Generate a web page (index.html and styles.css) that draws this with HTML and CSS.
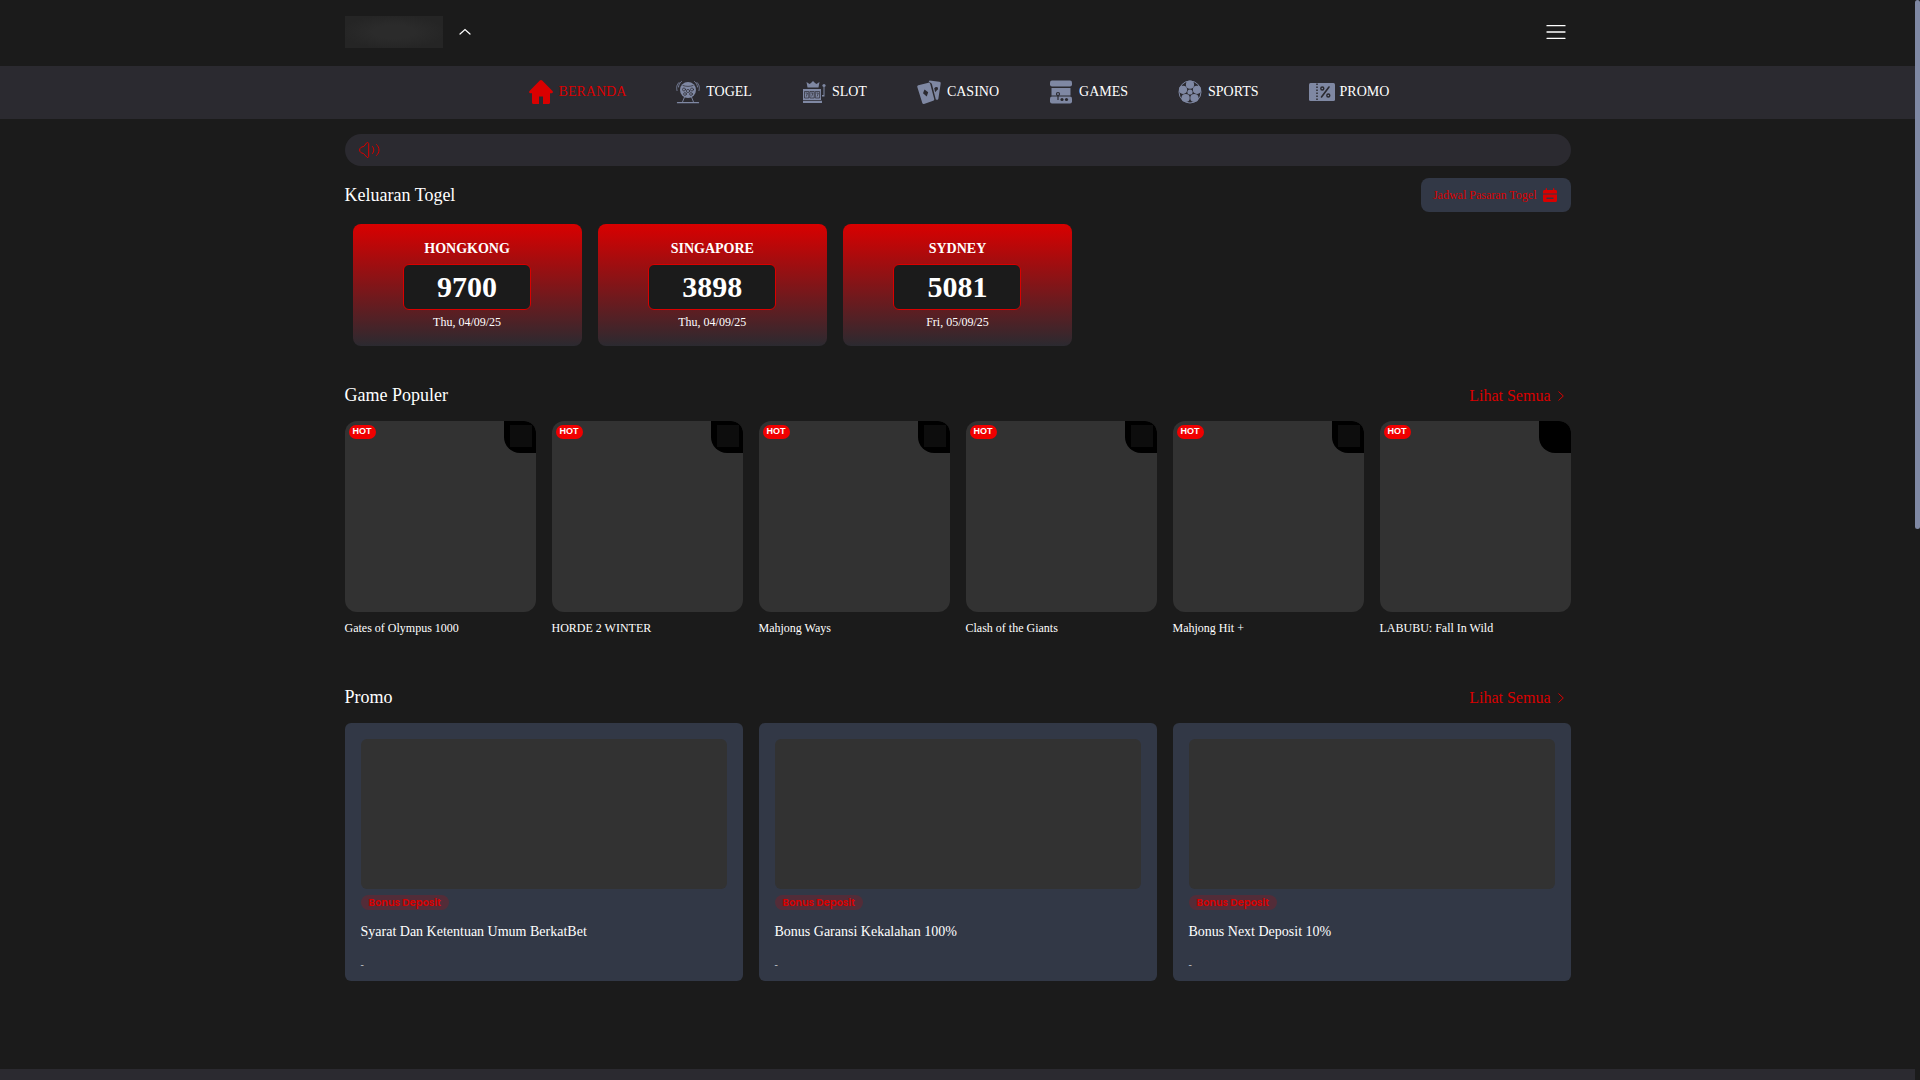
FILE: index.html
```html
<!DOCTYPE html>
<html lang="id">
<head>
<meta charset="utf-8">
<meta name="viewport" content="width=device-width, initial-scale=1">
<title>Beranda</title>
<link rel="stylesheet" href="styles.css">
</head>
<body>
<header class="topbar">
  <div class="container topbar-row">
    <a href="#" class="logo" aria-label="Beranda"></a>
    <button type="button" class="icon-button" aria-label="Tutup">
      <svg width="12" height="8" viewBox="0 0 12 8" fill="none" stroke="currentColor" stroke-width="1.2" stroke-linecap="round"><path d="M1 6L6 1.500l5 4.500"/></svg>
    </button>
    <button type="button" class="icon-button menu-button" aria-label="Menu">
      <svg width="20" height="16" viewBox="0 0 20 16" fill="none" stroke="currentColor" stroke-width="1.300" stroke-linecap="round"><path d="M1 1.700h18M1 8h18M1 14.300h18"/></svg>
    </button>
  </div>
</header>

<nav class="mainnav">
  <a href="#" class="nav-link active">
    <svg width="24" height="24" viewBox="0 0 24 24" fill="currentColor"><path d="M10.800.6a1.800 1.800 0 0 1 2.400 0L23.500 11c.8.900.4 2-.7 2.200H21v9.300c0 .9-.6 1.500-1.500 1.500H14v-7.500H10V24H4.500C3.600 24 3 23.400 3 22.500v-9.300H1.200C.1 13-.3 11.900.500 11z"/></svg>
    BERANDA</a>
  <a href="#" class="nav-link">
    <svg width="24" height="24" viewBox="0 0 24 24" fill="none" stroke="currentColor" stroke-linecap="round"><circle cx="12" cy="10" r="8" fill="currentColor" stroke="none"/><g stroke="#2b2a30" stroke-width=".7"><circle cx="8" cy="9.500" r="1.500"/><circle cx="16" cy="9.500" r="1.500"/><circle cx="9" cy="14" r="1.400"/><circle cx="15" cy="14" r="1.400"/><circle cx="12" cy="11" r="1.600"/><path d="M7 5.500c3 1.200 7 1.200 10 0"/></g><path stroke-width=".9" d="M3 2.500C.5 5 .3 7.500 1 10.500M5.500 1.500C3.300 3.200 2.700 5 2.500 7M21 2.500c2.500 2.500 2.700 5 2 8M18.500 1.500c2.200 1.700 2.800 3.500 3 5.500M8.500 17L6.500 22M15.500 17l2 5"/><path stroke-width="1.300" d="M1.500 22.700h21"/></svg>
    TOGEL</a>
  <a href="#" class="nav-link">
    <svg width="24" height="24" viewBox="0 0 24 24" fill="currentColor"><path d="M5.500 7.500L4.500 2l3 2L9 3l2-2 2 2 1.500 1 3-2-1 5.500zM1 9h18v11H1zM1 20.800h19V23H1zM20 15h1.500V7h1v9.500H20z"/><circle cx="22" cy="5.500" r="1.600"/><g fill="none" stroke="#2b2a30" stroke-width=".7"><path d="M2.500 11.500h4.300v6.500H2.500zM7.900 11.500h4.300v6.500H7.900zM13.300 11.500h4.300v6.500h-4.300zM3.500 13h2l-1.200 3.500M8.900 13h2l-1.200 3.500M14.300 13h2l-1.200 3.500"/></g></svg>
    SLOT</a>
  <a href="#" class="nav-link">
    <svg width="24" height="24" viewBox="0 0 24 24" fill="currentColor"><path d="M1.300 5.300L11.500 2.700c.8-.2 1.500.2 1.700 1l4 15.400c.2.800-.2 1.500-1 1.700L7 23.900c-.8.200-1.500-.2-1.700-1L.3 7c-.2-.8.200-1.500 1-1.700z"/><path d="M12.500.5l9.800 1.300c1 .1 1.600.8 1.400 1.700l-2.300 15c-.1.900-.7 1.400-1.600 1.300l-1-.2-3.800-15c-.4-1.600-1.800-2.600-3.600-2.200z"/><path fill="#2b2a30" d="M7.500 9.500l3.700 2.800-1.500 4.200L6 13.300z"/><path fill="#2b2a30" d="M17.300 8.500c1.500-2.500 4.500-1.500 3.500.8l-2.600 3z"/></svg>
    CASINO</a>
  <a href="#" class="nav-link">
    <svg width="24" height="24" viewBox="0 0 24 24" fill="currentColor"><rect x="1" y=".5" width="22" height="6" rx="2"/><path d="M2.500 8h19v7.500h-19z"/><rect x="1" y="16.500" width="22" height="7" rx="2"/><g fill="none" stroke="#2b2a30" stroke-width="1.200"><circle cx="9" cy="14" r="1.500"/><path d="M9 15.500V20"/></g><circle cx="13" cy="19.500" r="1.600" fill="#2b2a30"/><circle cx="17.500" cy="19.500" r="1.600" fill="#2b2a30"/></svg>
    GAMES</a>
  <a href="#" class="nav-link">
    <svg width="24" height="24" viewBox="0 0 24 24" fill="currentColor"><circle cx="12" cy="12" r="11" fill="none" stroke="currentColor" stroke-width="1"/><circle cx="12" cy="12" r="2.600"/><circle cx="12" cy="4.700" r="4.100"/><circle cx="19" cy="9.800" r="4.100"/><circle cx="16.400" cy="18" r="4.100"/><circle cx="7.600" cy="18" r="4.100"/><circle cx="5" cy="9.800" r="4.100"/></svg>
    SPORTS</a>
  <a href="#" class="nav-link nav-promo">
    <svg width="26" height="24" viewBox="0 0 26 24" fill="currentColor"><rect y="3" width="26" height="18" rx="1.500"/><g fill="none" stroke="#2b2a30"><path d="M8 3.500V21" stroke-width="1.500" stroke-dasharray="1.500 1.500"/><path d="M20 7L12.500 17" stroke-width="1.600" stroke-linecap="round"/><circle cx="13.300" cy="8.500" r="1.500" stroke-width="1.400"/><circle cx="19.300" cy="15.500" r="1.500" stroke-width="1.400"/></g></svg>
    PROMO</a>
</nav>

<main class="container main">
  <div class="announcement">
    <svg width="21" height="16" viewBox="0 0 21 16" fill="none" stroke="currentColor" stroke-linecap="round" stroke-linejoin="round"><path d="M8 .7C9 .2 9.700.7 9.700 1.700v12.600c0 1-.7 1.500-1.700 1L4.500 11.500C2 11 .6 10 .6 8S2 5 4.500 4.500zM13.500 4.500c1.800 2 1.800 5 0 7M17.500 2.500c3.400 3 3.400 8 0 11"/></svg>
  </div>

  <section class="section">
    <div class="section-head results-head">
      <h2>Keluaran Togel</h2>
      <button type="button" class="schedule-button">Jadwal Pasaran Togel
        <svg width="14" height="14" viewBox="0 0 14 14" fill="currentColor"><path d="M0 3.500C0 2.600.6 2 1.500 2H2.700V.7c0-.9 1.300-.9 1.300 0V2h6V.7c0-.9 1.300-.9 1.300 0V2h1.200c.9 0 1.500.6 1.500 1.500v2H0zM0 6.500h14v6c0 .9-.6 1.500-1.500 1.500h-11C.6 14 0 13.400 0 12.500zM3.500 9.500v1.500h7V9.500z" fill-rule="evenodd"/></svg>
      </button>
    </div>
    <div class="results">
      <article class="result"><h3>HONGKONG</h3><strong class="result-number">9700</strong><time datetime="2025-09-04">Thu, 04/09/25</time></article>
      <article class="result"><h3>SINGAPORE</h3><strong class="result-number">3898</strong><time datetime="2025-09-04">Thu, 04/09/25</time></article>
      <article class="result"><h3>SYDNEY</h3><strong class="result-number">5081</strong><time datetime="2025-09-05">Fri, 05/09/25</time></article>
    </div>
  </section>

  <section class="section games-section">
    <div class="section-head">
      <h2>Game Populer</h2>
      <a href="#" class="more">Lihat Semua<svg width="6" height="10" viewBox="0 0 6 10" fill="none" stroke="currentColor"><path d="M.5.500L5.300 5 .5 9.500"/></svg></a>
    </div>
    <div class="games">
      <a href="#" class="game"><span class="thumb"><span class="hot">HOT</span><span class="provider"><span class="provider-logo"></span></span></span>Gates of Olympus 1000</a>
      <a href="#" class="game"><span class="thumb"><span class="hot">HOT</span><span class="provider"><span class="provider-logo"></span></span></span>HORDE 2 WINTER</a>
      <a href="#" class="game"><span class="thumb"><span class="hot">HOT</span><span class="provider"><span class="provider-logo"></span></span></span>Mahjong Ways</a>
      <a href="#" class="game"><span class="thumb"><span class="hot">HOT</span><span class="provider"><span class="provider-logo"></span></span></span>Clash of the Giants</a>
      <a href="#" class="game"><span class="thumb"><span class="hot">HOT</span><span class="provider"><span class="provider-logo"></span></span></span>Mahjong Hit +</a>
      <a href="#" class="game"><span class="thumb"><span class="hot">HOT</span><span class="provider"></span></span>LABUBU: Fall In Wild</a>
    </div>
  </section>

  <section class="section promo-section">
    <div class="section-head">
      <h2>Promo</h2>
      <a href="#" class="more">Lihat Semua<svg width="6" height="10" viewBox="0 0 6 10" fill="none" stroke="currentColor"><path d="M.5.500L5.300 5 .5 9.500"/></svg></a>
    </div>
    <div class="promos">
      <article class="promo"><div class="promo-image"></div><span class="tag">Bonus Deposit</span><h3>Syarat Dan Ketentuan Umum BerkatBet</h3><p>-</p></article>
      <article class="promo"><div class="promo-image"></div><span class="tag">Bonus Deposit</span><h3>Bonus Garansi Kekalahan 100%</h3><p>-</p></article>
      <article class="promo"><div class="promo-image"></div><span class="tag">Bonus Deposit</span><h3>Bonus Next Deposit 10%</h3><p>-</p></article>
    </div>
  </section>
</main>
<footer class="footer"></footer>
<div class="scroll-thumb"></div>
</body>
</html>
```
FILE: styles.css
```css
:root {
  --bg: #1b1b1b;
  --panel: #2b2a30;
  --slate: #323846;
  --red: #d90000;
  --muted: #7f88a3;
  --placeholder: #323232;
}

* {
  box-sizing: border-box;
}

body {
  margin: 0;
  padding-right: 5px;
  min-height: 100vh;
  display: flex;
  flex-direction: column;
  background: var(--bg);
  color: #fff;
  font-family: "Liberation Serif", serif;
  font-size: 14px;
  line-height: 20px;
}

h2,
h3,
p {
  margin: 0;
  font-weight: 400;
}

h3 {
  font-size: 14px;
}

a {
  color: inherit;
  text-decoration: none;
}

button {
  border: 0;
  font: inherit;
  cursor: pointer;
}

svg {
  display: block;
  flex: none;
}

.container {
  width: 100%;
  max-width: 1250px;
  margin: 0 auto;
  padding: 0 12px;
}

.topbar-row {
  display: flex;
  align-items: center;
  gap: 12px;
  padding-top: 16px;
  padding-bottom: 18px;
}

.logo {
  width: 98px;
  height: 32px;
  background: radial-gradient(ellipse, #2b2b2b 30%, #252525 75%);
}

.icon-button {
  padding: 4px;
  background: none;
  color: #fff;
}

.menu-button {
  margin-left: auto;
  padding: 0 5px;
}

.mainnav {
  display: flex;
  justify-content: center;
  flex-wrap: wrap;
  gap: 0 50px;
  padding-left: 3px;
  background: var(--panel);
}

.nav-link {
  display: flex;
  align-items: center;
  gap: 6px;
  padding: 14px 0 15px;
  line-height: 24px;
}

.nav-promo {
  gap: 5px;
}

.nav-link svg {
  color: var(--muted);
}

.nav-link.active,
.nav-link.active svg {
  color: var(--red);
}

.main {
  padding-top: 15px;
  padding-bottom: 88px;
}

.announcement {
  display: flex;
  align-items: center;
  height: 32px;
  padding: 0 14px;
  border-radius: 16px;
  background: var(--panel);
  color: var(--red);
}

.section {
  display: flex;
  flex-direction: column;
  gap: 12px;
  margin-top: 12px;
}

.games-section {
  margin-top: 36px;
}

.promo-section {
  margin-top: 48px;
}

.section-head {
  display: flex;
  justify-content: space-between;
  align-items: center;
}

.section-head h2 {
  font-size: 18px;
  line-height: 27px;
}

.schedule-button {
  display: flex;
  align-items: center;
  gap: 6px;
  padding: 8px 14px 8px 12px;
  border-radius: 8px;
  background: var(--slate);
  color: var(--red);
  font-size: 12px;
  line-height: 18px;
}

.results {
  display: grid;
  grid-template-columns: repeat(5, 1fr);
  gap: 16px;
  padding: 0 8px;
}

.result {
  display: flex;
  flex-direction: column;
  align-items: center;
  padding: 16px 12px 15px;
  border-radius: 8px;
  background: linear-gradient(180deg, var(--red), var(--panel));
}

.result h3 {
  font-weight: 700;
  line-height: 18px;
}

.result-number {
  width: 128px;
  margin: 6px 0 4px;
  border: 1px solid var(--red);
  border-radius: 6px;
  background: var(--bg);
  font-size: 30px;
  line-height: 44px;
  text-align: center;
}

.result time {
  font-size: 12px;
  line-height: 17px;
}

.more {
  display: flex;
  align-items: center;
  gap: 7px;
  padding-right: 7px;
  color: var(--red);
  font-size: 16px;
  line-height: 23px;
}

.games {
  display: grid;
  grid-template-columns: repeat(6, 1fr);
  gap: 16px;
}

.game {
  display: flex;
  flex-direction: column;
  gap: 8px;
  font-size: 12px;
  line-height: 16px;
}

.thumb {
  display: flex;
  justify-content: space-between;
  align-items: flex-start;
  aspect-ratio: 1;
  border-radius: 12px;
  overflow: hidden;
  background: var(--placeholder);
}

.hot {
  margin: 4px;
  padding: 0 4px 2px;
  border-radius: 7px;
  background: #f00000;
  font: 700 9px/12px "Liberation Sans", sans-serif;
}

.provider {
  width: 32px;
  height: 32px;
  padding: 4px 4px 6px 6px;
  border-bottom-left-radius: 16px;
  background: #000;
}

.provider-logo {
  display: block;
  height: 22px;
  background: #0d0d0d;
}

.promos {
  display: grid;
  grid-template-columns: repeat(3, 1fr);
  gap: 16px;
}

.promo {
  display: flex;
  flex-direction: column;
  align-items: flex-start;
  padding: 16px 16px 8px;
  border-radius: 6px;
  background: var(--slate);
}

.promo-image {
  width: 100%;
  height: 150px;
  border-radius: 6px;
  background: var(--placeholder);
}

.tag {
  margin-top: 6px;
  padding: 0 8px;
  border-radius: 8px;
  background: rgba(217, 0, 0, 0.2);
  color: var(--red);
  font: 600 10px/15px Poppins, Inter, sans-serif;
}

.promo h3 {
  margin: 11px 0 14px;
  line-height: 22px;
}

.promo p {
  color: #c4c6cc;
  font-size: 10px;
  line-height: 16px;
}

.footer {
  flex: 1;
  background: var(--panel);
}

.scroll-thumb {
  position: fixed;
  top: 0;
  right: 0;
  width: 5px;
  height: 49vh;
  border-radius: 3px;
  background: var(--muted);
}
```
